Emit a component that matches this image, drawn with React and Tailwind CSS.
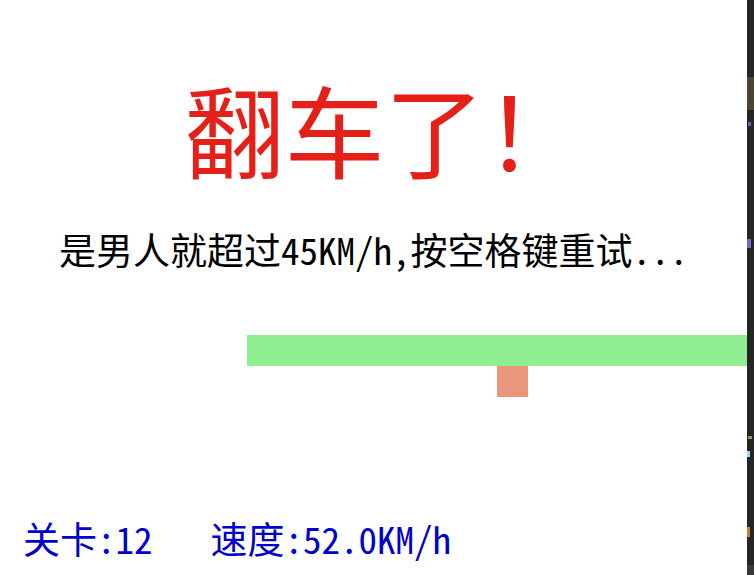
export default function App() {
  const mono = { fontFamily: '"Noto Sans Mono CJK SC", "Noto Sans CJK SC", monospace' };

  return (
    <div className="w-[754px] h-[575px] flex overflow-hidden bg-white">
      <div className="flex-1 flex flex-col">
        <h1
          className="pt-[78px] pl-[22px] text-center text-[100px] leading-none font-normal text-[#e52019]"
          style={{ fontFamily: '"Noto Sans CJK SC", sans-serif' }}
        >
          翻车了！
        </h1>
        <p className="mt-[53px] text-center text-[37px] leading-none text-black" style={mono}>
          是男人就超过45KM/h,按空格键重试...
        </p>

        {/* track + car */}
        <div className="mt-[67px] ml-[247px] h-[31px] bg-[#90ee90]" />
        <div className="ml-[497px] w-[31px] h-[31px] bg-[#e9967a]" />

        <div className="mt-auto mb-[18px] ml-[23px] flex gap-[58px] text-[37px] leading-none text-[#0000cd]" style={mono}>
          <span>关卡:12</span>
          <span>速度:52.0KM/h</span>
        </div>
      </div>

      {/* editor gutter peeking in at the right */}
      <div className="w-[7px] bg-[#252526] flex flex-col">
        <div className="mt-[77px] h-[33px] bg-[#4a4632]" />
        <div className="mt-[12px] ml-[1px] w-[3px] h-[4px] bg-[#5c6bc0]" />
        <div className="mt-[113px] w-[4px] h-[9px] bg-[#6b6fc4]" />
        <div className="mt-[188px] ml-[1px] w-[4px] h-[3px] bg-[#8a9a5b]" />
        <div className="mt-[12px] w-[3px] h-[6px] bg-[#9cdcfe]" />
        <div className="mt-[70px] w-[3px] h-[10px] bg-[#ce7a2e]" />
        <div className="mt-auto h-[10px] bg-[#3a3a3a]" />
      </div>
    </div>
  );
}
